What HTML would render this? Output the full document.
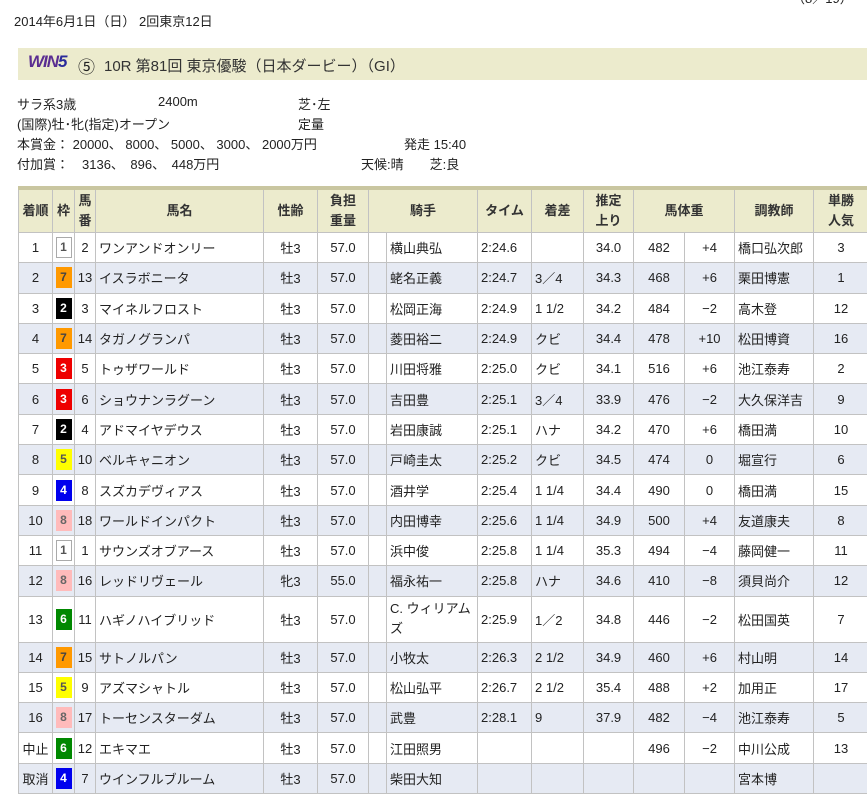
<!DOCTYPE html>
<html><head><meta charset="utf-8">
<style>
body{margin:0;background:#fff;font-family:"Liberation Sans","Noto Sans CJK JP",sans-serif;font-size:13px;color:#222;position:relative;width:867px;height:810px;overflow:hidden}
.abs{position:absolute;white-space:nowrap}
.title{position:absolute;left:18px;top:48px;width:849px;height:32px;background:#ecebcd}
table{position:absolute;left:18px;top:186px;border-collapse:collapse;table-layout:fixed;width:850px;border-top:4px solid #c9c6a0}
td,th{border:1px solid #c2c2c2;padding:0;height:29.3px;font-weight:normal;overflow:hidden;white-space:nowrap}
th{background:#ecebcd;font-weight:bold;height:42px;line-height:20px;color:#333}
tr.o td{background:#e6eaf3}
.c{text-align:center}.l{text-align:left;padding-left:3px}
.w{display:inline-block;width:16px;height:21px;line-height:21px;font-weight:bold;font-size:12px;text-align:center;vertical-align:middle;color:#fff}
.w1{background:#fff;border:1px solid #aaa;color:#555;width:14px;height:19px;line-height:19px}
.w2{background:#000}.w3{background:#e00}.w4{background:#0000ee}.w5{background:#ff0;color:#555}.w6{background:#080}.w7{background:#f90;color:#444}.w8{background:#fbb;color:#666}
</style></head><body>
<div class="abs" style="left:14px;top:11px;font-size:13px">2014年6月1日（日） 2回東京12日</div>
<div class="abs" style="left:792px;top:-12px;font-size:13px">（8／19）</div>
<div class="title"></div>
<div class="abs" style="left:28px;top:52px;font-style:italic;font-weight:bold;color:#5a2d91;font-size:17px;letter-spacing:-1px">WIN<span style="color:#2a2a9a">5</span></div>
<div class="abs" style="left:78px;top:53px;font-size:17px">⑤</div>
<div class="abs" style="left:104px;top:55px;font-size:15px;color:#333">10R 第81回 東京優駿（日本ダービー）（GI）</div>
<div class="abs" style="left:17px;top:94px">サラ系3歳</div>
<div class="abs" style="left:158px;top:94px">2400m</div>
<div class="abs" style="left:298px;top:94px">芝･左</div>
<div class="abs" style="left:17px;top:114px">(国際)牡･牝(指定)オープン</div>
<div class="abs" style="left:298px;top:114px">定量</div>
<div class="abs" style="left:17px;top:134px">本賞金： 20000、 8000、 5000、 3000、 2000万円</div>
<div class="abs" style="left:404px;top:134px">発走 15:40</div>
<div class="abs" style="left:17px;top:154px">付加賞：　3136、　896、　448万円</div>
<div class="abs" style="left:361px;top:154px">天候:晴　　芝:良</div>
<table>
<colgroup><col style="width:34px"><col style="width:22px"><col style="width:21px"><col style="width:168px"><col style="width:54px"><col style="width:51px"><col style="width:18px"><col style="width:91px"><col style="width:54px"><col style="width:52px"><col style="width:50px"><col style="width:51px"><col style="width:50px"><col style="width:79px"><col style="width:55px"></colgroup>
<tr><th>着順</th><th>枠</th><th>馬<br>番</th><th>馬名</th><th>性齢</th><th>負担<br>重量</th><th colspan="2">騎手</th><th>タイム</th><th>着差</th><th>推定<br>上り</th><th colspan="2">馬体重</th><th>調教師</th><th>単勝<br>人気</th></tr>
<tr><td class="c">1</td><td class="c"><span class="w w1">1</span></td><td class="c">2</td><td class="l">ワンアンドオンリー</td><td class="c">牡3</td><td class="c">57.0</td><td></td><td class="l">横山典弘</td><td class="l">2:24.6</td><td class="l"></td><td class="c">34.0</td><td class="c">482</td><td class="c">+4</td><td class="l">橋口弘次郎</td><td class="c">3</td></tr>
<tr class="o"><td class="c">2</td><td class="c"><span class="w w7">7</span></td><td class="c">13</td><td class="l">イスラボニータ</td><td class="c">牡3</td><td class="c">57.0</td><td></td><td class="l">蛯名正義</td><td class="l">2:24.7</td><td class="l">3／4</td><td class="c">34.3</td><td class="c">468</td><td class="c">+6</td><td class="l">栗田博憲</td><td class="c">1</td></tr>
<tr><td class="c">3</td><td class="c"><span class="w w2">2</span></td><td class="c">3</td><td class="l">マイネルフロスト</td><td class="c">牡3</td><td class="c">57.0</td><td></td><td class="l">松岡正海</td><td class="l">2:24.9</td><td class="l">1 1/2</td><td class="c">34.2</td><td class="c">484</td><td class="c">−2</td><td class="l">高木登</td><td class="c">12</td></tr>
<tr class="o"><td class="c">4</td><td class="c"><span class="w w7">7</span></td><td class="c">14</td><td class="l">タガノグランパ</td><td class="c">牡3</td><td class="c">57.0</td><td></td><td class="l">菱田裕二</td><td class="l">2:24.9</td><td class="l">クビ</td><td class="c">34.4</td><td class="c">478</td><td class="c">+10</td><td class="l">松田博資</td><td class="c">16</td></tr>
<tr><td class="c">5</td><td class="c"><span class="w w3">3</span></td><td class="c">5</td><td class="l">トゥザワールド</td><td class="c">牡3</td><td class="c">57.0</td><td></td><td class="l">川田将雅</td><td class="l">2:25.0</td><td class="l">クビ</td><td class="c">34.1</td><td class="c">516</td><td class="c">+6</td><td class="l">池江泰寿</td><td class="c">2</td></tr>
<tr class="o"><td class="c">6</td><td class="c"><span class="w w3">3</span></td><td class="c">6</td><td class="l">ショウナンラグーン</td><td class="c">牡3</td><td class="c">57.0</td><td></td><td class="l">吉田豊</td><td class="l">2:25.1</td><td class="l">3／4</td><td class="c">33.9</td><td class="c">476</td><td class="c">−2</td><td class="l">大久保洋吉</td><td class="c">9</td></tr>
<tr><td class="c">7</td><td class="c"><span class="w w2">2</span></td><td class="c">4</td><td class="l">アドマイヤデウス</td><td class="c">牡3</td><td class="c">57.0</td><td></td><td class="l">岩田康誠</td><td class="l">2:25.1</td><td class="l">ハナ</td><td class="c">34.2</td><td class="c">470</td><td class="c">+6</td><td class="l">橋田満</td><td class="c">10</td></tr>
<tr class="o"><td class="c">8</td><td class="c"><span class="w w5">5</span></td><td class="c">10</td><td class="l">ベルキャニオン</td><td class="c">牡3</td><td class="c">57.0</td><td></td><td class="l">戸崎圭太</td><td class="l">2:25.2</td><td class="l">クビ</td><td class="c">34.5</td><td class="c">474</td><td class="c">0</td><td class="l">堀宣行</td><td class="c">6</td></tr>
<tr><td class="c">9</td><td class="c"><span class="w w4">4</span></td><td class="c">8</td><td class="l">スズカデヴィアス</td><td class="c">牡3</td><td class="c">57.0</td><td></td><td class="l">酒井学</td><td class="l">2:25.4</td><td class="l">1 1/4</td><td class="c">34.4</td><td class="c">490</td><td class="c">0</td><td class="l">橋田満</td><td class="c">15</td></tr>
<tr class="o"><td class="c">10</td><td class="c"><span class="w w8">8</span></td><td class="c">18</td><td class="l">ワールドインパクト</td><td class="c">牡3</td><td class="c">57.0</td><td></td><td class="l">内田博幸</td><td class="l">2:25.6</td><td class="l">1 1/4</td><td class="c">34.9</td><td class="c">500</td><td class="c">+4</td><td class="l">友道康夫</td><td class="c">8</td></tr>
<tr><td class="c">11</td><td class="c"><span class="w w1">1</span></td><td class="c">1</td><td class="l">サウンズオブアース</td><td class="c">牡3</td><td class="c">57.0</td><td></td><td class="l">浜中俊</td><td class="l">2:25.8</td><td class="l">1 1/4</td><td class="c">35.3</td><td class="c">494</td><td class="c">−4</td><td class="l">藤岡健一</td><td class="c">11</td></tr>
<tr class="o"><td class="c">12</td><td class="c"><span class="w w8">8</span></td><td class="c">16</td><td class="l">レッドリヴェール</td><td class="c">牝3</td><td class="c">55.0</td><td></td><td class="l">福永祐一</td><td class="l">2:25.8</td><td class="l">ハナ</td><td class="c">34.6</td><td class="c">410</td><td class="c">−8</td><td class="l">須貝尚介</td><td class="c">12</td></tr>
<tr><td class="c" style="height:45px">13</td><td class="c"><span class="w w6">6</span></td><td class="c">11</td><td class="l">ハギノハイブリッド</td><td class="c">牡3</td><td class="c">57.0</td><td></td><td class="l" style="white-space:normal;line-height:20px">C. ウィリアムズ</td><td class="l">2:25.9</td><td class="l">1／2</td><td class="c">34.8</td><td class="c">446</td><td class="c">−2</td><td class="l">松田国英</td><td class="c">7</td></tr>
<tr class="o"><td class="c">14</td><td class="c"><span class="w w7">7</span></td><td class="c">15</td><td class="l">サトノルパン</td><td class="c">牡3</td><td class="c">57.0</td><td></td><td class="l">小牧太</td><td class="l">2:26.3</td><td class="l">2 1/2</td><td class="c">34.9</td><td class="c">460</td><td class="c">+6</td><td class="l">村山明</td><td class="c">14</td></tr>
<tr><td class="c">15</td><td class="c"><span class="w w5">5</span></td><td class="c">9</td><td class="l">アズマシャトル</td><td class="c">牡3</td><td class="c">57.0</td><td></td><td class="l">松山弘平</td><td class="l">2:26.7</td><td class="l">2 1/2</td><td class="c">35.4</td><td class="c">488</td><td class="c">+2</td><td class="l">加用正</td><td class="c">17</td></tr>
<tr class="o"><td class="c">16</td><td class="c"><span class="w w8">8</span></td><td class="c">17</td><td class="l">トーセンスターダム</td><td class="c">牡3</td><td class="c">57.0</td><td></td><td class="l">武豊</td><td class="l">2:28.1</td><td class="l">9</td><td class="c">37.9</td><td class="c">482</td><td class="c">−4</td><td class="l">池江泰寿</td><td class="c">5</td></tr>
<tr><td class="c">中止</td><td class="c"><span class="w w6">6</span></td><td class="c">12</td><td class="l">エキマエ</td><td class="c">牡3</td><td class="c">57.0</td><td></td><td class="l">江田照男</td><td></td><td></td><td></td><td class="c">496</td><td class="c">−2</td><td class="l">中川公成</td><td class="c">13</td></tr>
<tr class="o"><td class="c">取消</td><td class="c"><span class="w w4">4</span></td><td class="c">7</td><td class="l">ウインフルブルーム</td><td class="c">牡3</td><td class="c">57.0</td><td></td><td class="l">柴田大知</td><td></td><td></td><td></td><td></td><td></td><td class="l">宮本博</td><td></td></tr>
</table>
</body></html>
